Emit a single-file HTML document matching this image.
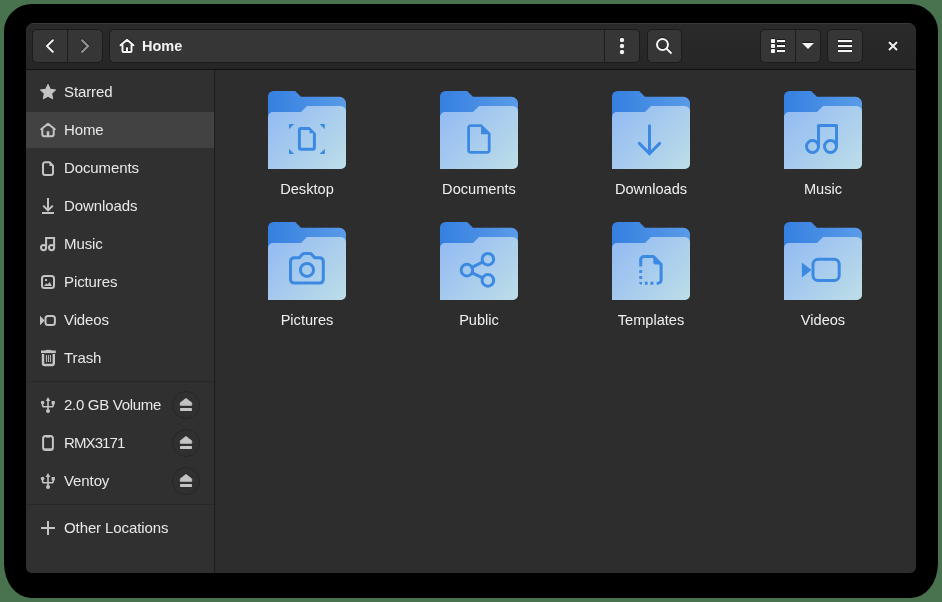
<!DOCTYPE html>
<html><head><meta charset="utf-8">
<style>
*{margin:0;padding:0;box-sizing:border-box}
html,body{width:942px;height:602px;overflow:hidden;background:#49734f;font-family:"Liberation Sans",sans-serif;-webkit-font-smoothing:antialiased}
.t,.lbl,.ht{will-change:transform}
.abs{position:absolute}
svg{overflow:visible}
#win > svg.abs{filter:drop-shadow(0 -1px 0.3px rgba(0,0,0,0.55))}
#shadow{position:absolute;left:4px;top:4px;width:934px;height:594px;border-radius:28px 28px 27px 27px / 27px 27px 35px 35px;background:#000}
#win{position:absolute;left:26px;top:23px;width:890px;height:550px;border-radius:8px 8px 6px 6px;overflow:hidden;background:#2d2d2d}
#hdr{position:absolute;left:0;top:0;width:890px;height:46px;background:linear-gradient(#2a2a2a,#262626);border-top:1px solid #3a3a3a}
#hdrline{position:absolute;left:0;top:46px;width:890px;height:1px;background:#111111}
.btn{position:absolute;top:6px;height:34px;background:#363636;border:1px solid #1b1b1b;border-radius:5px}
#side{position:absolute;left:0;top:47px;width:188px;height:503px;background:#303030}
#sideline{position:absolute;left:188px;top:47px;width:1px;height:503px;background:#1c1c1c}
.row{position:absolute;left:0;width:188px;height:36px}
.row.sel{background:#424242}
.row .t{position:absolute;left:38px;top:0;line-height:36px;font-size:15px;letter-spacing:-0.1px;color:#e8e8e8;white-space:nowrap}
.row svg{position:absolute;left:12px;top:10px}
.sep{position:absolute;left:0;width:188px;height:1px;background:#282828}
.ej{position:absolute;left:146px;top:4px;width:28px;height:28px;border-radius:50%;border:1px solid #262626}
.fold{position:absolute;width:80px;height:80px}
.lbl{position:absolute;width:172px;text-align:center;font-size:14.6px;color:#f0f0f0;line-height:16px}
</style></head><body>
<div id="shadow"></div>
<div id="win">
  <div id="hdr"></div>
  <div id="hdrline"></div>
  <!-- back/forward -->
  <div class="btn" style="left:6px;width:71px"></div>
  <div class="abs" style="left:41px;top:7px;width:1px;height:32px;background:#1d1d1d"></div>
  <svg class="abs" style="left:16px;top:15px" width="16" height="16" viewBox="0 0 16 16"><path d="M10.8 2.2 L5 8 L10.8 13.8" fill="none" stroke="#f0f0f0" stroke-width="2" stroke-linecap="round" stroke-linejoin="round"/></svg>
  <svg class="abs" style="left:51px;top:15px" width="16" height="16" viewBox="0 0 16 16"><path d="M5.2 2.2 L11 8 L5.2 13.8" fill="none" stroke="#959595" stroke-width="2" stroke-linecap="round" stroke-linejoin="round"/></svg>
  <!-- path bar -->
  <div class="btn" style="left:83px;width:531px"></div>
  <div class="abs" style="left:578px;top:7px;width:1px;height:32px;background:#1d1d1d"></div>
  <svg class="abs" style="left:93px;top:15px" width="16" height="16" viewBox="0 0 16 16"><path d="M1.5 7.2 L8 1.8 L14.5 7.2 M3.5 5.8 V13 A1 1 0 0 0 4.5 14 H11.5 A1 1 0 0 0 12.5 13 V5.8 M8 14 V10" fill="none" stroke="#f5f5f5" stroke-width="2" stroke-linecap="round" stroke-linejoin="round"/></svg>
  <div class="abs ht" style="left:116px;top:15px;font-size:14.5px;font-weight:bold;color:#f2f2f2;line-height:16px">Home</div>
  <svg class="abs" style="left:588px;top:15px" width="16" height="16" viewBox="0 0 16 16"><circle cx="8" cy="2" r="2.2" fill="#f0f0f0"/><circle cx="8" cy="8" r="2.2" fill="#f0f0f0"/><circle cx="8" cy="14" r="2.2" fill="#f0f0f0"/></svg>
  <!-- search -->
  <div class="btn" style="left:621px;width:35px"></div>
  <svg class="abs" style="left:629px;top:15px" width="18" height="18" viewBox="0 0 18 18"><circle cx="7.5" cy="6.5" r="5.5" fill="none" stroke="#f5f5f5" stroke-width="2"/><path d="M11.5 10.5 L16.5 15.5" stroke="#f5f5f5" stroke-width="2"/></svg>
  <!-- view group -->
  <div class="btn" style="left:734px;width:61px"></div>
  <div class="abs" style="left:769px;top:7px;width:1px;height:32px;background:#1d1d1d"></div>
  <svg class="abs" style="left:745px;top:16px" width="16" height="16" viewBox="0 0 16 16" fill="#f5f5f5"><rect x="0" y="0" width="4" height="4" rx="0.7"/><rect x="0" y="5" width="4" height="4" rx="0.7"/><rect x="0" y="10" width="4" height="4" rx="0.7"/><rect x="6" y="1" width="8" height="2"/><rect x="6" y="6" width="8" height="2"/><rect x="6" y="11" width="8" height="2"/></svg>
  <svg class="abs" style="left:776px;top:16px" width="14" height="10" viewBox="0 0 14 10"><path d="M0 4 H12 L6 10 Z" fill="#f5f5f5"/></svg>
  <!-- hamburger -->
  <div class="btn" style="left:801px;width:36px"></div>
  <svg class="abs" style="left:812px;top:17px" width="14" height="12" viewBox="0 0 14 12" fill="#f5f5f5"><rect x="0" y="0" width="14" height="2"/><rect x="0" y="5" width="14" height="2"/><rect x="0" y="10" width="14" height="2"/></svg>
  <!-- close -->
  <svg class="abs" style="left:862px;top:18px" width="10" height="10" viewBox="0 0 10 10"><path d="M1 1 L9 9 M9 1 L1 9" stroke="#f0f0f0" stroke-width="2"/></svg>

  <!-- sidebar -->
  <div id="side"></div>
  <div id="sideline"></div>
  <div class="row" style="top:51px"><svg style="left:14px;top:10px" width="16" height="16" viewBox="0 0 16 16" fill="none" stroke="#c4c4c4" stroke-width="2"><polygon points="8.00,0.40 10.29,5.24 15.61,5.93 11.71,9.61 12.70,14.87 8.00,12.30 3.30,14.87 4.29,9.61 0.39,5.93 5.71,5.24" fill="#c4c4c4" stroke="#c4c4c4" stroke-width="1" stroke-linejoin="round"/></svg><div class="t">Starred</div></div>
<div class="row sel" style="top:89px"><svg style="left:14px;top:10px" width="16" height="16" viewBox="0 0 16 16" fill="none" stroke="#c4c4c4" stroke-width="2"><path d="M1.2 7.2 L8 1.8 L14.8 7.2 M2.3 6.4 V12.2 A2 2 0 0 0 4.3 14.2 H11.7 A2 2 0 0 0 13.7 12.2 V6.4" stroke-linecap="round" stroke-linejoin="round"/><path d="M8 14 V9.3" stroke-width="2.6"/></svg><div class="t">Home</div></div>
<div class="row" style="top:127px"><svg style="left:14px;top:10px" width="16" height="16" viewBox="0 0 16 16" fill="none" stroke="#c4c4c4" stroke-width="2"><path d="M3 4.3 A2 2 0 0 1 5 2.3 H9.6 L13 5.7 V13 A2 2 0 0 1 11 15 H5 A2 2 0 0 1 3 13 Z" stroke-linejoin="round"/><path d="M9.5 2 V6 H13.5 Z" fill="#c4c4c4" stroke="none"/></svg><div class="t">Documents</div></div>
<div class="row" style="top:165px"><svg style="left:14px;top:10px" width="16" height="16" viewBox="0 0 16 16" fill="none" stroke="#c4c4c4" stroke-width="2"><path d="M8 0 V12.2 M3.2 7.6 L8 12.4 L12.8 7.6"/><rect x="2" y="14" width="12" height="2" fill="#c4c4c4" stroke="none"/></svg><div class="t">Downloads</div></div>
<div class="row" style="top:203px"><svg style="left:14px;top:10px" width="16" height="16" viewBox="0 0 16 16" fill="none" stroke="#c4c4c4" stroke-width="2"><circle cx="3.6" cy="11.6" r="2.6"/><circle cx="11.6" cy="11.6" r="2.6"/><path d="M6.1 11.6 V2 H14.1 V11.6"/></svg><div class="t">Music</div></div>
<div class="row" style="top:241px"><svg style="left:14px;top:10px" width="16" height="16" viewBox="0 0 16 16" fill="none" stroke="#c4c4c4" stroke-width="2"><rect x="2" y="2" width="12" height="12" rx="2.5"/><rect x="5" y="5" width="2" height="2" fill="#c4c4c4" stroke="none"/><path d="M4 12 L6.4 9.2 L7.6 10.4 L9.6 8 L12 12 Z" fill="#c4c4c4" stroke="none"/></svg><div class="t">Pictures</div></div>
<div class="row" style="top:279px"><svg style="left:14px;top:10px" width="16" height="16" viewBox="0 0 16 16" fill="none" stroke="#c4c4c4" stroke-width="2"><path d="M0 3.8 L4.6 8.4 L0 13.2 Z" fill="#c4c4c4" stroke="none"/><rect x="5.5" y="4" width="9.4" height="9" rx="2.5"/></svg><div class="t">Videos</div></div>
<div class="row" style="top:317px"><svg style="left:14px;top:10px" width="16" height="16" viewBox="0 0 16 16" fill="none" stroke="#c4c4c4" stroke-width="2"><path d="M1 1.8 H15.8" stroke-width="2.6"/><path d="M5.6 0.6 H11.2" stroke-width="1.4"/><path d="M3 4 V13.5 A1.5 1.5 0 0 0 4.5 15 H12.3 A1.5 1.5 0 0 0 13.8 13.5 V4" stroke-width="2.4"/><path d="M6.4 5 V12 M8.4 5 V12 M10.4 5 V12" stroke-width="1"/></svg><div class="t">Trash</div></div>
<div class="sep" style="top:358px"></div>
<div class="row" style="top:364px"><svg style="left:14px;top:10px" width="16" height="16" viewBox="0 0 16 16" fill="none" stroke="#c4c4c4" stroke-width="2"><path d="M8 3.5 V13 M2.6 5.5 V8.6 A1.2 1.2 0 0 0 3.8 9.8 H12 A1.2 1.2 0 0 0 13.2 8.6 V6" stroke-width="1.6"/><path d="M8 0 L10.3 4 H5.7 Z" fill="#c4c4c4" stroke="none"/><circle cx="8" cy="14" r="2" fill="#c4c4c4" stroke="none"/><circle cx="2.6" cy="5.5" r="1.8" fill="#c4c4c4" stroke="none"/><rect x="11.6" y="4" width="3.2" height="3.4" fill="#c4c4c4" stroke="none"/></svg><div class="t" style="letter-spacing:-0.3px">2.0 GB Volume</div><div class="ej"></div><svg style="left:152px;top:10px" width="16" height="16" viewBox="0 0 16 16" fill="#c4c4c4" stroke="none"><path d="M8 1.3 L13.8 5.8 V8.4 H2.2 V5.8 Z" stroke="#c4c4c4" stroke-width="0.6" stroke-linejoin="round"/><rect x="2" y="11" width="12" height="3" rx="0.8"/></svg></div>
<div class="row" style="top:402px"><svg style="left:14px;top:10px" width="16" height="16" viewBox="0 0 16 16" fill="none" stroke="#c4c4c4" stroke-width="2"><rect x="3.1" y="1.1" width="9.8" height="13.9" rx="2.5"/><path d="M6 2 H10" stroke-width="1.4"/><path d="M3 13.8 H13" stroke-width="1"/></svg><div class="t" style="letter-spacing:-0.9px">RMX3171</div><div class="ej"></div><svg style="left:152px;top:10px" width="16" height="16" viewBox="0 0 16 16" fill="#c4c4c4" stroke="none"><path d="M8 1.3 L13.8 5.8 V8.4 H2.2 V5.8 Z" stroke="#c4c4c4" stroke-width="0.6" stroke-linejoin="round"/><rect x="2" y="11" width="12" height="3" rx="0.8"/></svg></div>
<div class="row" style="top:440px"><svg style="left:14px;top:10px" width="16" height="16" viewBox="0 0 16 16" fill="none" stroke="#c4c4c4" stroke-width="2"><path d="M8 3.5 V13 M2.6 5.5 V8.6 A1.2 1.2 0 0 0 3.8 9.8 H12 A1.2 1.2 0 0 0 13.2 8.6 V6" stroke-width="1.6"/><path d="M8 0 L10.3 4 H5.7 Z" fill="#c4c4c4" stroke="none"/><circle cx="8" cy="14" r="2" fill="#c4c4c4" stroke="none"/><circle cx="2.6" cy="5.5" r="1.8" fill="#c4c4c4" stroke="none"/><rect x="11.6" y="4" width="3.2" height="3.4" fill="#c4c4c4" stroke="none"/></svg><div class="t">Ventoy</div><div class="ej"></div><svg style="left:152px;top:10px" width="16" height="16" viewBox="0 0 16 16" fill="#c4c4c4" stroke="none"><path d="M8 1.3 L13.8 5.8 V8.4 H2.2 V5.8 Z" stroke="#c4c4c4" stroke-width="0.6" stroke-linejoin="round"/><rect x="2" y="11" width="12" height="3" rx="0.8"/></svg></div>
<div class="sep" style="top:481px"></div>
<div class="row" style="top:487px"><svg style="left:14px;top:10px" width="16" height="16" viewBox="0 0 16 16" fill="none" stroke="#c4c4c4" stroke-width="2"><path d="M8 1 V15 M1 8 H15"/></svg><div class="t">Other Locations</div></div>

  <!-- content -->
  <svg width="0" height="0" style="position:absolute"><defs><linearGradient id="gb" x1="0" y1="0" x2="1" y2="0"><stop offset="0" stop-color="#3580e0"/><stop offset="1" stop-color="#5a9be8"/></linearGradient><linearGradient id="gf" x1="0" y1="0.25" x2="1" y2="1"><stop offset="0" stop-color="#96bdf2"/><stop offset="1" stop-color="#bddee8"/></linearGradient></defs></svg>
<svg class="fold" style="left:242px;top:68px" width="80" height="80" viewBox="0 0 80 80"><path d="M0 5.5 A5.5 5.5 0 0 1 5.5 0 H27.2 L32.9 5.8 H71.5 A6.5 6.5 0 0 1 78 12.3 V40 H0 Z" fill="url(#gb)"/><path d="M0 26 A5 5 0 0 1 5 21 H33 L39 15 H72.5 A5.5 5.5 0 0 1 78 20.5 V73 A5 5 0 0 1 73 78 H0 Z" fill="url(#gf)"/><g fill="none" stroke="#3c89e2" stroke-width="3"><path fill-rule="evenodd" fill="#3c89e2" stroke="none" d="M29.9 39 Q29.9 36 32.9 36 H41.5 L47.9 42.4 V56.7 Q47.9 59.7 44.9 59.7 H32.9 Q29.9 59.7 29.9 56.7 Z M32.9 39 V56.7 H44.9 V42.3 H41.5 V39 Z"/><g fill="#3c89e2" stroke="none"><path d="M21 33 H26.2 L21 38.2 Z"/><path d="M56.8 33 H51.6 L56.8 38.2 Z"/><path d="M21 62.9 V57.7 L26.2 62.9 Z"/><path d="M56.8 62.9 V57.7 L51.6 62.9 Z"/></g></g></svg><div class="lbl" style="left:195px;top:158px">Desktop</div>
<svg class="fold" style="left:414px;top:68px" width="80" height="80" viewBox="0 0 80 80"><path d="M0 5.5 A5.5 5.5 0 0 1 5.5 0 H27.2 L32.9 5.8 H71.5 A6.5 6.5 0 0 1 78 12.3 V40 H0 Z" fill="url(#gb)"/><path d="M0 26 A5 5 0 0 1 5 21 H33 L39 15 H72.5 A5.5 5.5 0 0 1 78 20.5 V73 A5 5 0 0 1 73 78 H0 Z" fill="url(#gf)"/><g fill="none" stroke="#3c89e2" stroke-width="3"><path fill-rule="evenodd" fill="#3c89e2" stroke="none" d="M27.2 37 Q27.2 33.2 31 33.2 H41.5 L50.6 42.3 V59 Q50.6 62.8 46.8 62.8 H31 Q27.2 62.8 27.2 59 Z M30 36 V60 H47.8 V43.2 H41 V36 Z"/></g></svg><div class="lbl" style="left:367px;top:158px">Documents</div>
<svg class="fold" style="left:586px;top:68px" width="80" height="80" viewBox="0 0 80 80"><path d="M0 5.5 A5.5 5.5 0 0 1 5.5 0 H27.2 L32.9 5.8 H71.5 A6.5 6.5 0 0 1 78 12.3 V40 H0 Z" fill="url(#gb)"/><path d="M0 26 A5 5 0 0 1 5 21 H33 L39 15 H72.5 A5.5 5.5 0 0 1 78 20.5 V73 A5 5 0 0 1 73 78 H0 Z" fill="url(#gf)"/><g fill="none" stroke="#3c89e2" stroke-width="3"><path d="M37.5 34.7 V62" stroke-linecap="round"/><path d="M27.3 52.4 L37.5 62.6 L47.7 52.4" stroke-linecap="round"/></g></svg><div class="lbl" style="left:539px;top:158px">Downloads</div>
<svg class="fold" style="left:758px;top:68px" width="80" height="80" viewBox="0 0 80 80"><path d="M0 5.5 A5.5 5.5 0 0 1 5.5 0 H27.2 L32.9 5.8 H71.5 A6.5 6.5 0 0 1 78 12.3 V40 H0 Z" fill="url(#gb)"/><path d="M0 26 A5 5 0 0 1 5 21 H33 L39 15 H72.5 A5.5 5.5 0 0 1 78 20.5 V73 A5 5 0 0 1 73 78 H0 Z" fill="url(#gf)"/><g fill="none" stroke="#3c89e2" stroke-width="3"><circle cx="28.5" cy="55.5" r="6"/><circle cx="46.5" cy="55.5" r="6"/><path d="M34.5 55.5 V34.5 H52.5 V55.5" stroke-linejoin="round"/></g></svg><div class="lbl" style="left:711px;top:158px">Music</div>
<svg class="fold" style="left:242px;top:199px" width="80" height="80" viewBox="0 0 80 80"><path d="M0 5.5 A5.5 5.5 0 0 1 5.5 0 H27.2 L32.9 5.8 H71.5 A6.5 6.5 0 0 1 78 12.3 V40 H0 Z" fill="url(#gb)"/><path d="M0 26 A5 5 0 0 1 5 21 H33 L39 15 H72.5 A5.5 5.5 0 0 1 78 20.5 V73 A5 5 0 0 1 73 78 H0 Z" fill="url(#gf)"/><g fill="none" stroke="#3c89e2" stroke-width="3"><path d="M22.5 57.1 V39.7 Q22.5 35.7 26.5 35.7 H31.3 L34.2 32.4 Q35 31.6 36.2 31.6 H41.8 Q43 31.6 43.8 32.4 L46.7 35.7 H51.3 Q55.3 35.7 55.3 39.7 V57.1 Q55.3 61.1 51.3 61.1 H26.5 Q22.5 61.1 22.5 57.1 Z" stroke-linejoin="round"/><circle cx="39" cy="47.9" r="6.5"/></g></svg><div class="lbl" style="left:195px;top:289px">Pictures</div>
<svg class="fold" style="left:414px;top:199px" width="80" height="80" viewBox="0 0 80 80"><path d="M0 5.5 A5.5 5.5 0 0 1 5.5 0 H27.2 L32.9 5.8 H71.5 A6.5 6.5 0 0 1 78 12.3 V40 H0 Z" fill="url(#gb)"/><path d="M0 26 A5 5 0 0 1 5 21 H33 L39 15 H72.5 A5.5 5.5 0 0 1 78 20.5 V73 A5 5 0 0 1 73 78 H0 Z" fill="url(#gf)"/><g fill="none" stroke="#3c89e2" stroke-width="3"><circle cx="26.9" cy="48.1" r="5.8"/><circle cx="47.9" cy="37.2" r="5.8"/><circle cx="47.9" cy="58.4" r="5.8"/><path d="M32 45.4 L42.8 39.8 M32 50.8 L42.8 55.8"/></g></svg><div class="lbl" style="left:367px;top:289px">Public</div>
<svg class="fold" style="left:586px;top:199px" width="80" height="80" viewBox="0 0 80 80"><path d="M0 5.5 A5.5 5.5 0 0 1 5.5 0 H27.2 L32.9 5.8 H71.5 A6.5 6.5 0 0 1 78 12.3 V40 H0 Z" fill="url(#gb)"/><path d="M0 26 A5 5 0 0 1 5 21 H33 L39 15 H72.5 A5.5 5.5 0 0 1 78 20.5 V73 A5 5 0 0 1 73 78 H0 Z" fill="url(#gf)"/><g fill="none" stroke="#3c89e2" stroke-width="3"><path d="M28.7 44.5 V37.8 A3.2 3.2 0 0 1 31.9 34.6 H41.5 L49.1 42.2 V58 A3.2 3.2 0 0 1 45.9 61.2 H44.7" stroke-linejoin="round"/><path d="M41.3 34.4 V40.4 A2 2 0 0 0 43.3 42.4 H49.3 Z" fill="#3c89e2" stroke="none"/><g fill="#3c89e2" stroke="none"><rect x="27.2" y="48.1" width="3" height="2.8"/><rect x="27.2" y="54.1" width="3" height="2.8"/><path d="M27.2 60 H30 V62.7 Q27.2 62.7 27.2 60 Z"/><rect x="32.8" y="59.7" width="2.8" height="3"/><rect x="38.4" y="59.7" width="3" height="3"/></g></g></svg><div class="lbl" style="left:539px;top:289px">Templates</div>
<svg class="fold" style="left:758px;top:199px" width="80" height="80" viewBox="0 0 80 80"><path d="M0 5.5 A5.5 5.5 0 0 1 5.5 0 H27.2 L32.9 5.8 H71.5 A6.5 6.5 0 0 1 78 12.3 V40 H0 Z" fill="url(#gb)"/><path d="M0 26 A5 5 0 0 1 5 21 H33 L39 15 H72.5 A5.5 5.5 0 0 1 78 20.5 V73 A5 5 0 0 1 73 78 H0 Z" fill="url(#gf)"/><g fill="none" stroke="#3c89e2" stroke-width="3"><path d="M17.9 40.4 L27.5 48 L17.9 55.5 Z" fill="#3c89e2" stroke="none"/><rect x="29" y="37.3" width="26.2" height="21.2" rx="5"/></g></svg><div class="lbl" style="left:711px;top:289px">Videos</div>
</div>
</body></html>
